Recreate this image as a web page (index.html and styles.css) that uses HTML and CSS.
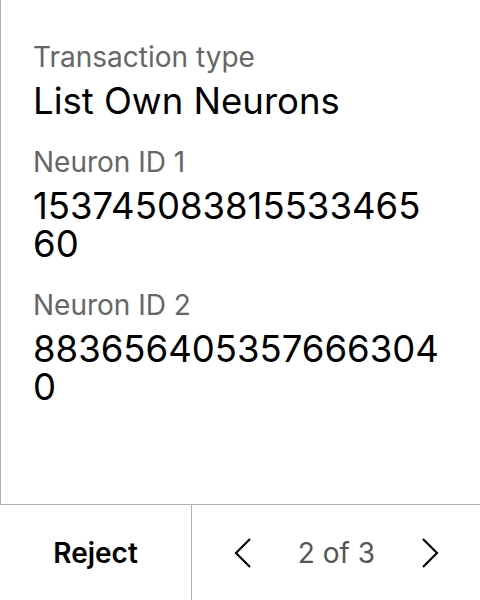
FILE: index.html
```html
<!DOCTYPE html>
<html>
<head>
<meta charset="utf-8">
<link rel="stylesheet" href="styles.css">
</head>
<body>
<div class="screen">
  <main class="content">
    <div class="field">
      <div class="label">Transaction type</div>
      <div class="value">List Own Neurons</div>
    </div>
    <div class="field">
      <div class="label">Neuron ID 1</div>
      <div class="value num">153745083815533465<wbr>60</div>
    </div>
    <div class="field">
      <div class="label">Neuron ID 2</div>
      <div class="value num">883656405357666304<wbr>0</div>
    </div>
  </main>
  <footer class="footer">
    <button class="reject">Reject</button>
    <div class="pager">
      <svg class="chev" width="20" height="32" viewBox="0 0 20 32"><path d="M17 2 L3 16 L17 30" fill="none" stroke="#000" stroke-width="2.2"/></svg>
      <span class="count">2 of 3</span>
      <svg class="chev" width="20" height="32" viewBox="0 0 20 32"><path d="M3 2 L17 16 L3 30" fill="none" stroke="#000" stroke-width="2.2"/></svg>
    </div>
  </footer>
</div>
</body>
</html>
```
FILE: styles.css
```css
* { box-sizing: border-box; }
html, body { margin: 0; padding: 0; background: #fff; }
body { font-family: Inter, "Noto Sans", sans-serif; color: #000; }
.screen { width: 480px; height: 600px; display: flex; flex-direction: column; }
.content {
  flex: 1;
  border-left: 1px solid #b0b0b0;
  padding: 40px 33px 0 32px;
  display: flex;
  flex-direction: column;
  gap: 25px;
}
.field { display: flex; flex-direction: column; gap: 8px; }
.label { font-size: 28px; line-height: 34px; color: #666; }
.value { font-size: 36.5px; line-height: 38px; }
.num { overflow-wrap: normal; }
.footer {
  height: 96px;
  border-top: 1px solid #b0b0b0;
  display: flex;
}
.reject {
  width: 192px;
  border: none;
  border-right: 1px solid #b0b0b0;
  background: #fff;
  font-family: Inter, "Noto Sans", sans-serif;
  font-size: 28px;
  font-weight: 600;
  color: #000;
  padding: 0;
}
.pager {
  flex: 1;
  display: flex;
  align-items: center;
  justify-content: space-between;
  padding: 0 40px 0 41px;
}
.count { font-size: 28px; color: #555; }
```
